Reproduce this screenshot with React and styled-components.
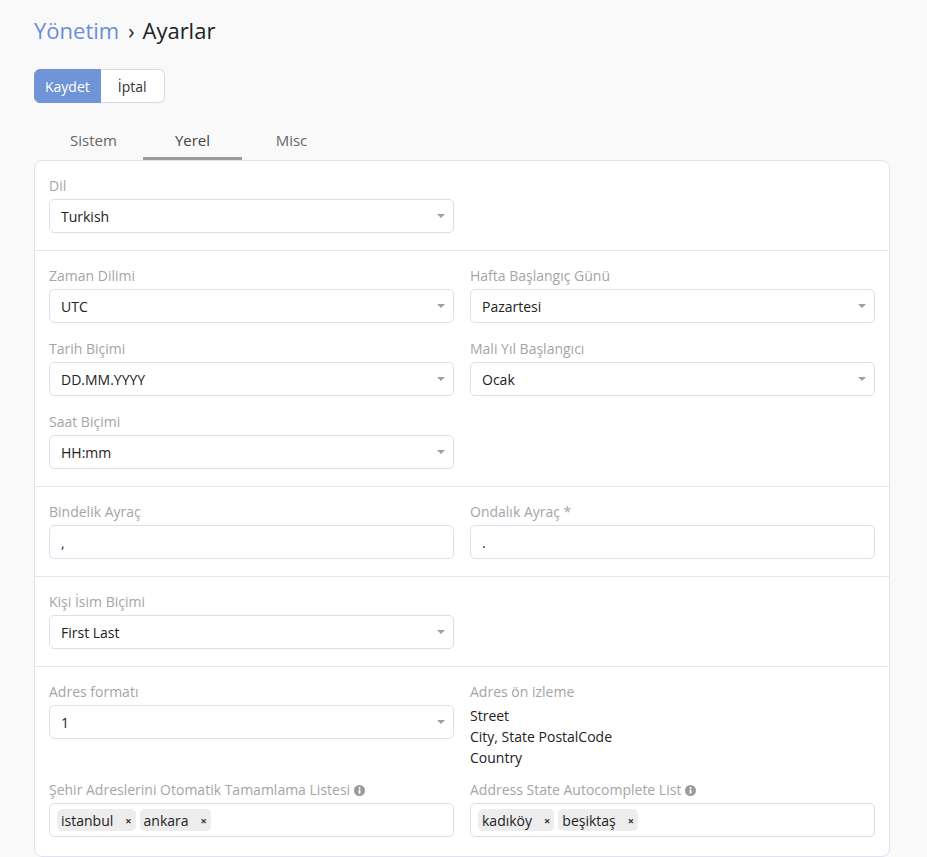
import React from 'react';
import styled, {createGlobalStyle} from 'styled-components';

const GlobalStyle = createGlobalStyle`
    body {
        margin: 0;
        background: #f9f9fa;
        font-family: "Open Sans", "Liberation Sans", sans-serif;
        color: #222;
    }
`;

const Page = styled.div`
    padding: 13px 37px 0 34px;
`;

const Title = styled.h1`
    margin: 0;
    font-size: 22px;
    font-weight: 400;
    line-height: 34px;
    color: #222;
    a {
        color: #6a8ed8;
        text-decoration: none;
    }
    span {
        margin: 0 8px 0 9px;
        font-size: 21px;
    }
`;

const ButtonGroup = styled.div`
    display: inline-flex;
    margin-top: 21px;
`;

const Button = styled.button`
    height: 34px;
    padding: 0 ${p => p.primary ? '10px' : '17px'};
    font-family: inherit;
    font-size: 14px;
    border: 1px solid ${p => p.primary ? '#6f94d8' : '#d8d8e4'};
    background: ${p => p.primary ? '#6f94d8' : '#fff'};
    color: ${p => p.primary ? '#fff' : '#333'};
    border-radius: ${p => p.primary ? '6px 0 0 6px' : '0 6px 6px 0'};
    border-left-width: ${p => p.primary ? '1px' : '0'};
`;

const Tabs = styled.nav`
    display: flex;
    margin: 25px 0 0 10px;
`;

const Tab = styled.div`
    width: 99px;
    text-align: center;
    font-size: 15px;
    line-height: 24px;
    padding-bottom: 5px;
    color: ${p => p.active ? '#444' : '#666'};
    border-bottom: 3px solid ${p => p.active ? '#9a9a9a' : 'transparent'};
`;

const Card = styled.div`
    background: #fff;
    border: 1px solid #e2e2ef;
    border-radius: 8px;
`;

const Section = styled.div`
    padding: 15px 14px ${p => p.last ? '3px' : '1px'};
    border-top: ${p => p.first ? 'none' : '1px solid #e6e6f0'};
`;

const Grid = styled.div`
    display: grid;
    grid-template-columns: 1fr 1fr;
    column-gap: 16px;
    align-items: start;
`;

const Field = styled.div`
    margin-bottom: ${p => p.tight ? '12px' : '16px'};
`;

const Label = styled.div`
    font-size: 14px;
    line-height: 20px;
    margin-bottom: 3px;
    color: #a5a5a5;
    display: flex;
    align-items: center;
    gap: 4px;
`;

const Box = styled.div`
    position: relative;
    box-sizing: border-box;
    height: 34px;
    display: flex;
    align-items: center;
    padding: 0 ${p => p.tags ? '7px' : '11px'};
    gap: 4px;
    border: 1px solid #dedeef;
    border-radius: 5px;
    font-size: 14px;
    color: #222;
    background: #fff;
`;

const Caret = styled.i`
    position: absolute;
    right: 8px;
    top: 14px;
    width: 0;
    height: 0;
    border-left: 4px solid transparent;
    border-right: 4px solid transparent;
    border-top: 4px solid #a0a0a0;
`;

const Tag = styled.span`
    display: inline-flex;
    align-items: center;
    height: 22px;
    padding: 0 4px;
    border-radius: 5px;
    background: #ededed;
    font-size: 14px;
    color: #222;
    b {
        font-size: 11px;
        font-weight: 700;
        margin-left: 12px;
        color: #333;
    }
`;

const Preview = styled.div`
    font-size: 14px;
    line-height: 21px;
    color: #222;
`;

const InfoIcon = () => (
    <svg width="11" height="11" viewBox="0 0 12 12">
        <circle cx="6" cy="6" r="6" fill="#9a9a9a" />
        <circle cx="6" cy="3.2" r="1.1" fill="#fff" />
        <rect x="5" y="5" width="2" height="4.6" rx="0.6" fill="#fff" />
    </svg>
);

const Select = ({label, value}) => (
    <Field>
        <Label>{label}</Label>
        <Box>
            {value}
            <Caret />
        </Box>
    </Field>
);

const Input = ({label, value}) => (
    <Field>
        <Label>{label}</Label>
        <Box>{value}</Box>
    </Field>
);

const TagList = ({label, tags}) => (
    <Field>
        <Label>{label} <InfoIcon /></Label>
        <Box tags>
            {tags.map(t => <Tag key={t}>{t}<b>×</b></Tag>)}
        </Box>
    </Field>
);

export default function App(){
    return (
        <Page>
            <GlobalStyle />
            <Title><a href="#">Yönetim</a><span>›</span>Ayarlar</Title>
            <ButtonGroup>
                <Button primary>Kaydet</Button>
                <Button>İptal</Button>
            </ButtonGroup>
            <Tabs>
                <Tab>Sistem</Tab>
                <Tab active>Yerel</Tab>
                <Tab>Misc</Tab>
            </Tabs>
            <Card>
                <Section first>
                    <Grid>
                        <Select label="Dil" value="Turkish" />
                    </Grid>
                </Section>
                <Section>
                    <Grid>
                        <Select label="Zaman Dilimi" value="UTC" />
                        <Select label="Hafta Başlangıç Günü" value="Pazartesi" />
                        <Select label="Tarih Biçimi" value="DD.MM.YYYY" />
                        <Select label="Mali Yıl Başlangıcı" value="Ocak" />
                        <Select label="Saat Biçimi" value="HH:mm" />
                    </Grid>
                </Section>
                <Section>
                    <Grid>
                        <Input label="Bindelik Ayraç" value="," />
                        <Input label="Ondalık Ayraç *" value="." />
                    </Grid>
                </Section>
                <Section>
                    <Grid>
                        <Select label="Kişi İsim Biçimi" value="First Last" />
                    </Grid>
                </Section>
                <Section last>
                    <Grid>
                        <Select label="Adres formatı" value="1" />
                        <Field tight>
                            <Label>Adres ön izleme</Label>
                            <Preview>
                                <div>Street</div>
                                <div>City, State PostalCode</div>
                                <div>Country</div>
                            </Preview>
                        </Field>
                        <TagList label="Şehir Adreslerini Otomatik Tamamlama Listesi" tags={['istanbul', 'ankara']} />
                        <TagList label="Address State Autocomplete List" tags={['kadıköy', 'beşiktaş']} />
                    </Grid>
                </Section>
            </Card>
        </Page>
    );
}
